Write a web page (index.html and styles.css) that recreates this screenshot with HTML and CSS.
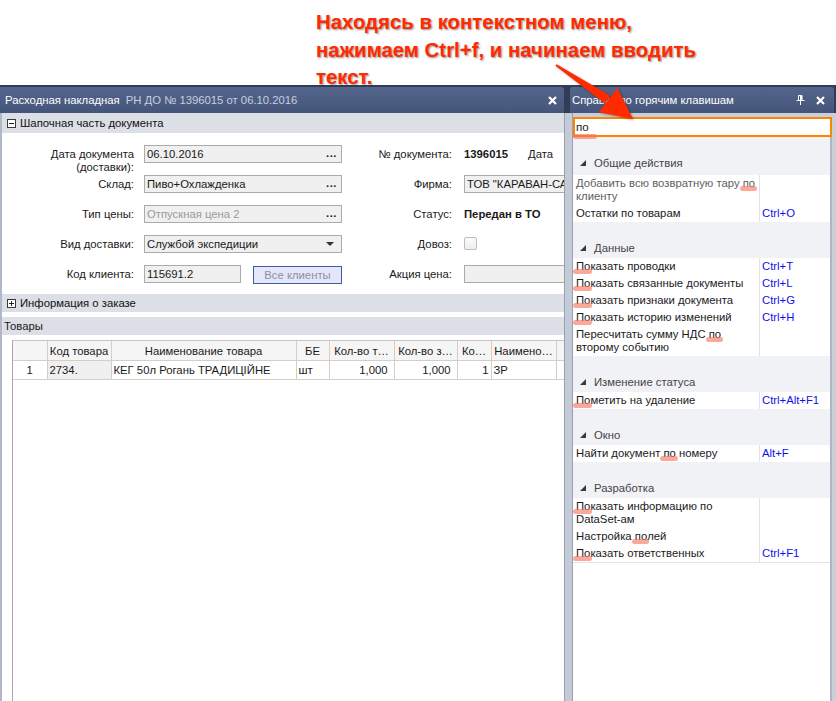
FILE: index.html
```html
<!DOCTYPE html>
<html lang="ru">
<head>
<meta charset="utf-8">
<title>Справка по горячим клавишам</title>
<link rel="stylesheet" href="styles.css">
</head>
<body>
<div class="note">Находясь в контекстном меню,<br>нажимаем Ctrl+f, и начинаем вводить<br>текст.</div>
<svg class="arrow" viewBox="540 50 100 75" width="100" height="75">
  <polygon points="556.6,64.2 610.4,95.8 604.6,103.2 555.4,65.8" fill="#ff2a00"/>
  <polygon points="633,119 598.6,112.2 617.4,87.8" fill="#ff2a00"/>
</svg>
<div class="workspace">
  <section class="doc">
    <header class="tab-head">
      <span class="t1">Расходная накладная</span>
      <span class="t2">РН ДО № 1396015 от 06.10.2016</span>
      <svg class="close" width="9" height="9" viewBox="0 0 9 9"><path d="M1 1L8 8M8 1L1 8" stroke="#fff" stroke-width="2.2"/></svg>
    </header>
    <div class="doc-body">
      <div class="group"><span class="box"><span class="h"></span></span>Шапочная часть документа</div>
      <div class="form">
        <div class="row">
          <div class="lbl">Дата документа<br>(доставки):</div>
          <div class="field wide"><span class="ft">06.10.2016</span><span class="dots">...</span></div>
          <div class="lbl2">№ документа:</div>
          <div class="val"><b>1396015</b><span class="more">Дата</span></div>
        </div>
        <div class="row">
          <div class="lbl">Склад:</div>
          <div class="field wide"><span class="ft">Пиво+Охлажденка</span><span class="dots">...</span></div>
          <div class="lbl2">Фирма:</div>
          <div class="val"><div class="field firm"><span class="ft">ТОВ "КАРАВАН-САРАЙ"</span></div></div>
        </div>
        <div class="row">
          <div class="lbl">Тип цены:</div>
          <div class="field wide"><span class="ft dis">Отпускная цена 2</span><span class="dots">...</span></div>
          <div class="lbl2">Статус:</div>
          <div class="val"><b>Передан в ТО</b></div>
        </div>
        <div class="row">
          <div class="lbl">Вид доставки:</div>
          <div class="field wide"><span class="ft">Службой экспедиции</span><span class="caret"></span></div>
          <div class="lbl2">Довоз:</div>
          <div class="val"><span class="check"></span></div>
        </div>
        <div class="row">
          <div class="lbl">Код клиента:</div>
          <div class="ctrl">
            <div class="field short"><span class="ft">115691.2</span></div>
            <div class="btn">Все клиенты</div>
          </div>
          <div class="lbl2">Акция цена:</div>
          <div class="val"><div class="field firm"></div></div>
        </div>
      </div>
      <div class="group g2"><span class="box"><span class="h"></span><span class="v"></span></span>Информация о заказе</div>
      <div class="goods-title">Товары</div>
      <div class="grid-wrap">
        <table class="grid">
          <colgroup>
            <col class="c-ind"><col class="c-code"><col class="c-name"><col class="c-be"><col class="c-q1"><col class="c-q2"><col class="c-ko"><col class="c-nm"><col class="c-k">
          </colgroup>
          <thead>
            <tr><th></th><th>Код товара</th><th>Наименование товара</th><th>БЕ</th><th>Кол-во т…</th><th>Кол-во з…</th><th>Ко…</th><th>Наимено…</th><th>К</th></tr>
          </thead>
          <tbody>
            <tr><td class="ind">1</td><td class="code">2734.</td><td>КЕГ 50л Рогань ТРАДИЦІЙНЕ</td><td>шт</td><td class="num">1,000</td><td class="num">1,000</td><td class="num n3">1</td><td>ЗР</td><td></td></tr>
          </tbody>
        </table>
      </div>
    </div>
  </section>
  <div class="splitter"></div>
  <section class="help">
    <header class="help-head">
      <span class="ht">Справка по горячим клавишам</span>
      <svg class="pin" width="9" height="10" viewBox="0 0 9 10"><path d="M2.5 0.5h3.5v5h-3.5z M0.5 5.5h8 M4.5 6v4" stroke="#fff" fill="none"/><path d="M5 0.5v5" stroke="#fff" stroke-width="2"/></svg>
      <svg class="close" width="9" height="9" viewBox="0 0 9 9"><path d="M1 1L8 8M8 1L1 8" stroke="#fff" stroke-width="2.2"/></svg>
    </header>
    <div class="help-body">
      <div class="search"><span class="hl low">по</span></div>
      <div class="list">
        <div class="cat first"><span class="tri"></span>Общие действия</div>
        <div class="items">
          <div class="it dim">Добавить всю возвратную тару <span class="hl">по</span><br>клиенту</div><div class="key"></div>
          <div class="it">Остатки по товарам</div><div class="key">Ctrl+O</div>
        </div>
        <div class="cat"><span class="tri"></span>Данные</div>
        <div class="items">
          <div class="it"><span class="hl">По</span>казать проводки</div><div class="key">Ctrl+T</div>
          <div class="it"><span class="hl">По</span>казать связанные документы</div><div class="key">Ctrl+L</div>
          <div class="it"><span class="hl">По</span>казать признаки документа</div><div class="key">Ctrl+G</div>
          <div class="it"><span class="hl">По</span>казать историю изменений</div><div class="key">Ctrl+H</div>
          <div class="it">Пересчитать сумму НДС <span class="hl">по</span><br>второму событию</div><div class="key"></div>
        </div>
        <div class="cat"><span class="tri"></span>Изменение статуса</div>
        <div class="items">
          <div class="it"><span class="hl">По</span>метить на удаление</div><div class="key">Ctrl+Alt+F1</div>
        </div>
        <div class="cat"><span class="tri"></span>Окно</div>
        <div class="items">
          <div class="it">Найти документ <span class="hl">по</span> номеру</div><div class="key">Alt+F</div>
        </div>
        <div class="cat"><span class="tri"></span>Разработка</div>
        <div class="items">
          <div class="it"><span class="hl">По</span>казать информацию по<br>DataSet-ам</div><div class="key"></div>
          <div class="it">Настройка <span class="hl">по</span>лей</div><div class="key"></div>
          <div class="it"><span class="hl">По</span>казать ответственных</div><div class="key">Ctrl+F1</div>
        </div>
      </div>
    </div>
  </section>
</div>
</body>
</html>
```

FILE: styles.css
```css
html, body {
  margin: 0;
  padding: 0;
}
body {
  width: 836px;
  height: 701px;
  overflow: hidden;
  position: relative;
  background: #fff;
  font-family: "Liberation Sans", Arial, sans-serif;
  font-size: 11.3px;
  color: #1a1a1a;
}

/* annotation */
.note {
  position: relative;
  z-index: 3;
  height: 85px;
  box-sizing: border-box;
  padding: 9px 0 0 316px;
  font-size: 20.4px;
  font-weight: bold;
  line-height: 27.5px;
  color: #ff2a00;
  text-shadow: 1px 1px 2px rgba(0, 0, 0, 0.45);
  white-space: nowrap;
}
.arrow {
  position: absolute;
  left: 540px;
  top: 50px;
  z-index: 4;
  filter: drop-shadow(1px 1px 1px rgba(0, 0, 0, 0.35));
}

/* workspace */
.workspace {
  display: flex;
  height: 616px;
  box-sizing: border-box;
  padding-top: 2px;
  background: #313d58;
}

/* document panel */
.doc {
  width: 564px;
  display: flex;
  flex-direction: column;
}
.tab-head {
  height: 26px;
  flex: none;
  display: flex;
  align-items: center;
  padding: 0 7px 0 5px;
  background: linear-gradient(#54658c, #45557a);
  border-radius: 0 3px 0 0;
  white-space: nowrap;
  font-size: 11.3px;
}
.t1 { color: #fff; }
.t2 { color: #c7cfe0; margin-left: 6px; }
.tab-head .close { margin-left: auto; }

.doc-body {
  flex: 1;
  background: #fff;
  border-left: 2px solid #b1b8c7;
  display: flex;
  flex-direction: column;
  overflow: hidden;
}
.group {
  height: 20px;
  flex: none;
  display: flex;
  align-items: center;
  background: #dcdfe6;
  padding-left: 5px;
  color: #111;
}
.group.g2 {
  height: 18px;
  margin-top: 1px;
}
.box {
  width: 9px;
  height: 9px;
  box-sizing: border-box;
  border: 1px solid #3a3a3a;
  background: #fff;
  margin-right: 4px;
  position: relative;
}
.box .h {
  position: absolute;
  left: 1px; right: 1px; top: 3px;
  height: 1px;
  background: #222;
}
.box .v {
  position: absolute;
  top: 1px; bottom: 1px; left: 3px;
  width: 1px;
  background: #222;
}

.form {
  height: 160px;
  flex: none;
  box-sizing: border-box;
  padding-top: 12px;
  display: flex;
  flex-direction: column;
  gap: 12px;
}
.row {
  height: 18px;
  display: flex;
  align-items: flex-start;
  white-space: nowrap;
}
.lbl {
  width: 132px;
  margin-right: 10px;
  text-align: right;
  line-height: 13px;
  padding-top: 3px;
  flex: none;
}
.lbl2 {
  width: 110px;
  margin-right: 12px;
  text-align: right;
  line-height: 13px;
  padding-top: 3px;
  flex: none;
}
.val {
  flex: 1;
  line-height: 13px;
  padding-top: 3px;
  display: flex;
  align-items: flex-start;
  min-width: 0;
}
.val .firm { margin-top: -3px; }
.more { margin-left: 20px; }
.ctrl {
  width: 198px;
  flex: none;
  display: flex;
  justify-content: space-between;
}
.field {
  height: 18px;
  box-sizing: border-box;
  border: 1px solid #a9abb0;
  background: #f0f0f0;
  display: flex;
  align-items: center;
  padding: 0 4px 0 2px;
  flex: none;
}
.field.wide { width: 198px; }
.field.short { width: 97px; }
.field.firm { width: 120px; }
.ft { line-height: 14px; }
.ft.dis { color: #9a9a9a; }
.dots {
  margin-left: auto;
  font-weight: bold;
  letter-spacing: 0.5px;
  line-height: 10px;
  padding-bottom: 3px;
  color: #222;
}
.caret {
  margin-left: auto;
  margin-right: 3px;
  width: 0;
  height: 0;
  border-left: 4px solid transparent;
  border-right: 4px solid transparent;
  border-top: 4px solid #333;
}
.btn {
  width: 89px;
  height: 18px;
  box-sizing: border-box;
  border: 1px solid #3d5d9b;
  background: #e6e6fb;
  color: #8e8ea0;
  text-align: center;
  line-height: 16px;
  margin-top: 1px;
}
.check {
  width: 13px;
  height: 13px;
  box-sizing: border-box;
  border: 1px solid #bdbdbd;
  border-radius: 2px;
  background: linear-gradient(#fbfbfb, #ededed);
  margin-top: -1px;
}

.goods-title {
  height: 18px;
  flex: none;
  margin-top: 5px;
  background: #dcdfe6;
  padding-left: 2px;
  line-height: 18px;
}
.grid-wrap {
  flex: 1;
  margin: 5px 0 0 10px;
  border-left: 1px solid #a7a7a7;
  border-top: 1px solid #c6c6c6;
  overflow: hidden;
}
.grid {
  border-collapse: collapse;
  table-layout: fixed;
  width: 583px;
  white-space: nowrap;
}
.c-ind { width: 34px; }
.c-code { width: 64px; }
.c-name { width: 185px; }
.c-be { width: 33px; }
.c-q1 { width: 65px; }
.c-q2 { width: 63px; }
.c-ko { width: 34px; }
.c-nm { width: 65px; }
.c-k { width: 40px; }
.grid th {
  height: 19px;
  padding: 0 2px;
  font-weight: normal;
  background: #f5f5f5;
  border-right: 1px solid #d3cec6;
  border-bottom: 1px solid #d3cec6;
  text-align: center;
  overflow: hidden;
}
.grid td {
  height: 18px;
  padding: 0 2px;
  border-right: 1px solid #d3cec6;
  border-bottom: 1px solid #d3cec6;
  overflow: hidden;
}
.grid td.ind { text-align: center; }
.grid td.code { background: #f0f0f0; }
.grid td.num { text-align: right; padding-right: 6px; }
.grid td.n3 { padding-right: 2px; }

/* splitter */
.splitter {
  width: 7px;
  flex: none;
  margin-top: 26px;
  background: #c4cad6;
  border-left: 1px solid #98a1b3;
  border-right: 1px solid #98a1b3;
}

/* help panel */
.help {
  flex: 1;
  display: flex;
  flex-direction: column;
  min-width: 0;
}
.help-head {
  height: 26px;
  flex: none;
  margin-left: -3px;
  padding: 0 9px 0 2px;
  display: flex;
  align-items: center;
  background: linear-gradient(#54658c, #45557a);
  border-radius: 3px 3px 0 0;
  margin-right: 2px;
  color: #fff;
  white-space: nowrap;
  font-size: 11.3px;
}
.help-head .pin { margin-left: auto; margin-right: 11px; }
.help-body {
  flex: 1;
  display: flex;
  flex-direction: column;
  background: #c9ced9;
  padding: 4px 4px 0 0;
}
.search {
  height: 20px;
  flex: none;
  box-sizing: border-box;
  border: 2px solid #ff8400;
  background: #fff;
  padding-left: 1px;
  line-height: 16px;
  font-size: 11.6px;
}
.list {
  flex: 1;
  background: #fff;
  border-right: 2px solid #aeb5c3;
}
.cat {
  height: 36px;
  box-sizing: border-box;
  padding: 19px 0 0 7px;
  line-height: 14px;
  background: #f1f2f5;
  color: #454545;
  display: flex;
  align-items: flex-start;
}
.cat.first {
  height: 38px;
}
.tri {
  width: 0;
  height: 0;
  border-left: 6px solid transparent;
  border-bottom: 6px solid #3a3a3a;
  margin: 4px 8px 0 0;
}
.items {
  display: grid;
  grid-template-columns: 187px 1fr;
  border-bottom: 1px solid #e3e3e3;
  margin-bottom: -1px;
}
.it {
  padding: 2px 0 2px 3px;
  line-height: 13px;
  white-space: nowrap;
  border-right: 1px solid #e3e3e3;
}
.it.dim { color: #5e5e5e; }
.key {
  padding: 2px 0 2px 2px;
  line-height: 13px;
  color: #1010ee;
  white-space: nowrap;
}

/* red highlight marks (annotation) */
.hl {
  position: relative;
}
.hl::after {
  content: "";
  position: absolute;
  left: -3px;
  right: -2px;
  bottom: -2px;
  height: 5px;
  border-radius: 3px;
  background: rgba(246, 110, 88, 0.6);
}
.hl.low::after {
  bottom: -6px;
  right: -8px;
}
```
